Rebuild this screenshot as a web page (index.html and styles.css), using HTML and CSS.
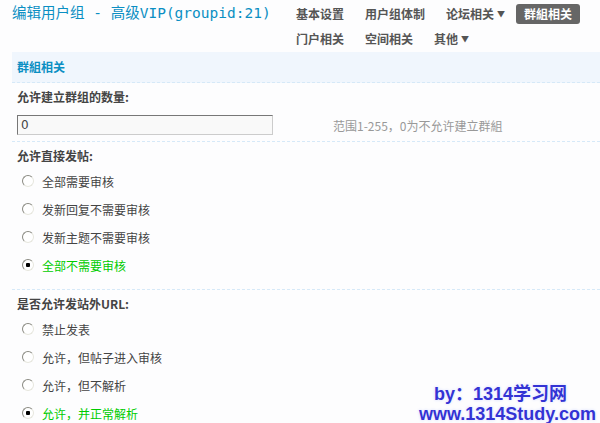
FILE: index.html
```html
<!DOCTYPE html>
<html lang="zh-CN">

<head>
    <meta charset="UTF-8">
    <meta name="viewport" content="width=device-width, initial-scale=1.0">
    <title>编辑用户组</title>
    <link rel="stylesheet" href="styles.css">
</head>

<body>
    <div class="page">
        <div class="topbar">
            <h1 class="title">编辑用户组 - 高级VIP(groupid:21)</h1>
            <ul class="nav">
                <li>基本设置</li>
                <li>用户组体制</li>
                <li>论坛相关<span class="arrow">▼</span></li>
                <li class="current">群組相关</li>
                <li>门户相关</li>
                <li>空间相关</li>
                <li>其他<span class="arrow">▼</span></li>
            </ul>
        </div>

        <div class="section-head">群組相关</div>

        <div class="group first">
            <div class="label">允许建立群组的数量:</div>
            <div class="field">
                <input class="text-input" type="text" value="0">
                <span class="hint">范围1-255，0为不允许建立群組</span>
            </div>
        </div>

        <div class="group">
            <div class="label">允许直接发帖:</div>
            <label class="option"><input type="radio" name="post">全部需要审核</label>
            <label class="option"><input type="radio" name="post">发新回复不需要审核</label>
            <label class="option"><input type="radio" name="post">发新主题不需要审核</label>
            <label class="option on"><input type="radio" name="post" checked>全部不需要审核</label>
        </div>

        <div class="group">
            <div class="label">是否允许发站外URL:</div>
            <label class="option"><input type="radio" name="url">禁止发表</label>
            <label class="option"><input type="radio" name="url">允许，但帖子进入审核</label>
            <label class="option"><input type="radio" name="url">允许，但不解析</label>
            <label class="option on"><input type="radio" name="url" checked>允许，并正常解析</label>
        </div>
    </div>

    <div class="watermark">
        <div class="wm-top">by：1314学习网</div>
        <div>www.1314Study.com</div>
    </div>
</body>

</html>
```

FILE: styles.css
```css
:root {
    --blue: #0b8fc3;
    --text: #444;
    --line: #d6e9f8;
}

body {
    margin: 0;
    background: #fdfdfe;
    color: var(--text);
    font-family: "Noto Sans CJK SC", "DejaVu Sans", sans-serif;
    font-size: 12px;
    overflow: hidden;
    position: relative;
    height: 423px;
}

.page {
    padding: 0 0 0 12px;
}

/* header: title + tabs */
.topbar {
    display: flex;
    justify-content: space-between;
    height: 52px;
}

.title {
    margin: 4px 0 0 0;
    font-family: "DejaVu Sans Mono", "Noto Sans CJK SC", monospace;
    font-size: 14.5px;
    font-weight: normal;
    line-height: 18px;
    color: var(--blue);
    white-space: nowrap;
}

.nav {
    list-style: none;
    margin: 4px 0 0 0;
    padding: 0;
    width: 310px;
    display: flex;
    flex-wrap: wrap;
    column-gap: 9px;
}

.nav li {
    padding: 0 6px;
    height: 19px;
    line-height: 19px;
    font-weight: bold;
    color: #555;
    white-space: nowrap;
}

.nav .arrow {
    font-size: 8px;
    margin-left: 3px;
    vertical-align: 2px;
}

.nav li.current {
    background: #666;
    color: #fff;
    border-radius: 3px;
    height: 20px;
    line-height: 20px;
    margin-left: -4px;
    padding: 0 8px;
}

.section-head {
    background: #f0f6fd;
    height: 30px;
    line-height: 30px;
    padding-left: 5px;
    color: var(--blue);
    font-weight: bold;
    border-bottom: 1px dashed var(--line);
}

.group {
    padding: 5px 0 10px 5px;
    border-bottom: 1px dashed var(--line);
}

.group.first {
    padding-bottom: 6px;
}

.label {
    font-weight: bold;
    height: 18px;
    line-height: 18px;
    margin-bottom: 2px;
}

.group.first .label {
    margin-bottom: 9px;
}

.field {
    display: flex;
    align-items: center;
}

.text-input {
    box-sizing: border-box;
    width: 256px;
    height: 20px;
    margin: 0;
    padding: 0 3px;
    border: 1px solid;
    border-color: #777 #ccc #ccc #777;
    background: #f9f9f9;
    font-family: "DejaVu Sans", sans-serif;
    font-size: 12px;
    color: #444;
}

.hint {
    margin-left: 60px;
    color: #999;
}

.option {
    display: flex;
    align-items: center;
    height: 28px;
    padding-left: 5px;
}

.option.on {
    color: #00cc00;
}

.option input {
    appearance: none;
    margin: 0 8px 0 0;
    width: 12px;
    height: 12px;
    border-radius: 50%;
    border: 1px solid;
    border-color: #8a8a82 #e6e6de #e6e6de #8a8a82;
    background: #fff;
}

.option input:checked {
    background: radial-gradient(circle, #000 0 2px, #fff 2.5px);
}

/* site mark, bottom right */
.watermark {
    position: absolute;
    right: 4px;
    bottom: -1px;
    text-align: center;
    font-family: "Liberation Sans", "Noto Sans CJK SC", sans-serif;
    font-weight: bold;
    font-size: 18px;
    line-height: 20px;
    color: #3333d4;
    text-shadow: 0 0 2px #fff, 0 0 3px #c8d0ff;
}

.wm-top {
    margin-right: 14px;
}
```
